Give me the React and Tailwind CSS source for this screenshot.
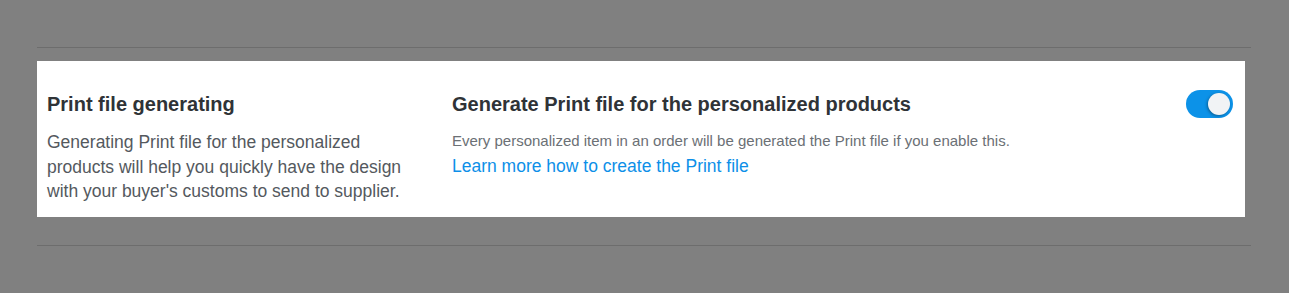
import React, { useState } from "react";

function Toggle({ checked, onChange }) {
  return (
    <button
      type="button"
      role="switch"
      aria-checked={checked}
      onClick={() => onChange(!checked)}
      className={`relative h-[28px] w-[47px] shrink-0 rounded-full ${
        checked ? "bg-[#0c92e8]" : "bg-[#c4c8cc]"
      }`}
    >
      <span
        className={`absolute top-[3px] h-[22px] w-[22px] rounded-full bg-[#f1f3f5] shadow-[-1px_1px_3px_rgba(0,0,0,0.35)] ${
          checked ? "left-[22px]" : "left-[3px]"
        }`}
      />
    </button>
  );
}

export default function App() {
  const [enabled, setEnabled] = useState(true);

  return (
    <div
      className="min-h-[293px] bg-[#808080] pt-[47px] pl-[37px] pr-[38px]"
      style={{ fontFamily: '"Liberation Sans", Arial, sans-serif' }}
    >
      <div className="h-px bg-[#6d6d6d]" />

      {/* Print file settings */}
      <div className="mt-[13px] mr-[6px] flex bg-white pt-[29px] pb-[13px] pl-[10px] pr-[12px]">
        <div className="w-[375px] shrink-0">
          <h3 className="text-[20px] leading-[28px] font-bold text-[#2f3337]">
            Print file generating
          </h3>
          <p className="mt-3 text-[17.5px] leading-[24.7px] text-[#54595e]">
            Generating Print file for the personalized products will help you
            quickly have the design with your buyer's customs to send to
            supplier.
          </p>
        </div>

        <div className="ml-[30px] flex flex-1 items-start justify-between">
          <div>
            <h3 className="text-[20px] leading-[28px] font-bold text-[#2f3337]">
              Generate Print file for the personalized products
            </h3>
            <p className="mt-3 text-[15px] leading-[22px] text-[#6b7075]">
              Every personalized item in an order will be generated the Print
              file if you enable this.
            </p>
            <a
              href="#"
              className="mt-[2px] block text-[17.5px] leading-[25px] text-[#0d8fe8]"
            >
              Learn more how to create the Print file
            </a>
          </div>
          <Toggle checked={enabled} onChange={setEnabled} />
        </div>
      </div>

      <div className="mt-[28px] h-px bg-[#6d6d6d]" />
    </div>
  );
}
